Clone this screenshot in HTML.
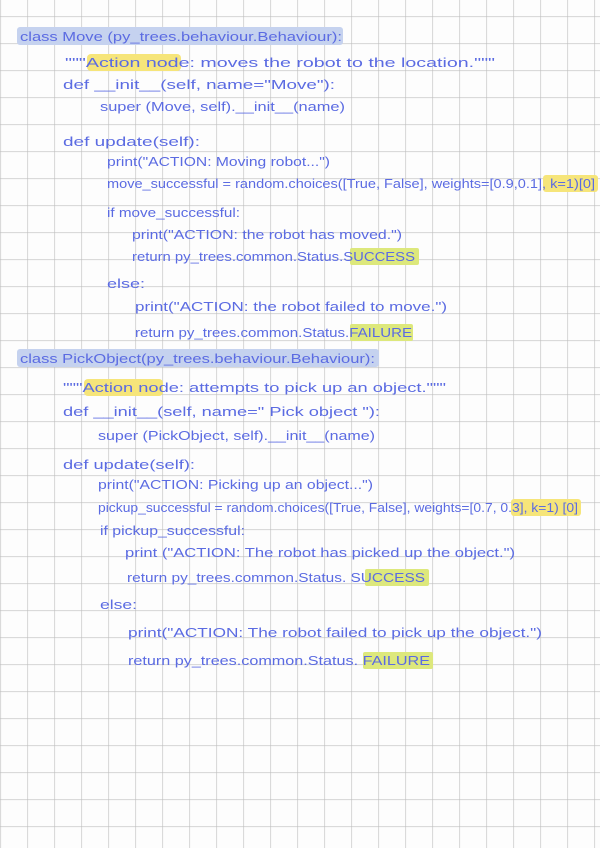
<!DOCTYPE html>
<html><head><meta charset="utf-8"><style>
html,body{margin:0;padding:0;background:#fdfdfd;}
svg{display:block}
text{font-family:"Liberation Sans",sans-serif;font-size:12.5px;fill:#5b6be2;}
</style></head><body>
<svg width="600" height="848" viewBox="0 0 600 848" xmlns="http://www.w3.org/2000/svg">
<defs>
<pattern id="g" x="0.3" y="16.3" width="27" height="27" patternUnits="userSpaceOnUse">
<path d="M0 0H27M0 0V27" stroke="#bdbdbd" stroke-width="1.2" fill="none"/>
</pattern>
</defs>
<rect width="600" height="848" fill="#fdfdfd"/>
<rect width="600" height="848" fill="url(#g)"/>
<!-- highlights -->
<rect x="17" y="27" width="326" height="18" rx="3" fill="#c5d2ef"/>
<rect x="87" y="54" width="94" height="17" rx="4" fill="#f6e57a"/>
<rect x="543" y="175" width="55" height="17" rx="3" fill="#f6e57a"/>
<rect x="350" y="248" width="69" height="17" rx="2" fill="#dde87c"/>
<rect x="350" y="324" width="63" height="17" rx="2" fill="#dde87c"/>
<rect x="17" y="349" width="362" height="18" rx="3" fill="#c5d2ef"/>
<rect x="84" y="379" width="79" height="17" rx="4" fill="#f6e57a"/>
<rect x="511" y="499" width="70" height="17" rx="3" fill="#f6e57a"/>
<rect x="365" y="569" width="64" height="17" rx="2" fill="#dde87c"/>
<rect x="363" y="652" width="70" height="17" rx="2" fill="#dde87c"/>
<!-- text -->
<text x="20" y="41" textLength="322" lengthAdjust="spacingAndGlyphs">class  Move (py_trees.behaviour.Behaviour):</text>
<text x="65" y="67" textLength="430" lengthAdjust="spacingAndGlyphs">"""Action  node: moves the robot to the location."""</text>
<text x="63" y="89" textLength="272" lengthAdjust="spacingAndGlyphs">def __init__(self, name="Move"):</text>
<text x="100" y="111" textLength="245" lengthAdjust="spacingAndGlyphs">super (Move, self).__init__(name)</text>
<text x="63" y="146" textLength="137" lengthAdjust="spacingAndGlyphs">def  update(self):</text>
<text x="107" y="166" textLength="223" lengthAdjust="spacingAndGlyphs">print("ACTION: Moving robot...")</text>
<text x="107" y="188" textLength="488" lengthAdjust="spacingAndGlyphs">move_successful = random.choices([True, False], weights=[0.9,0.1], k=1)[0]</text>
<text x="107" y="217" textLength="133" lengthAdjust="spacingAndGlyphs">if move_successful:</text>
<text x="132" y="239" textLength="270" lengthAdjust="spacingAndGlyphs">print("ACTION: the robot has moved.")</text>
<text x="132" y="261" textLength="283" lengthAdjust="spacingAndGlyphs">return  py_trees.common.Status.SUCCESS</text>
<text x="107" y="288" textLength="38" lengthAdjust="spacingAndGlyphs">else:</text>
<text x="135" y="311" textLength="312" lengthAdjust="spacingAndGlyphs">print("ACTION: the robot failed to move.")</text>
<text x="135" y="337" textLength="277" lengthAdjust="spacingAndGlyphs">return py_trees.common.Status.FAILURE</text>
<text x="20" y="363" textLength="355" lengthAdjust="spacingAndGlyphs">class PickObject(py_trees.behaviour.Behaviour):</text>
<text x="63" y="392" textLength="383" lengthAdjust="spacingAndGlyphs">"""Action node: attempts to pick up an object."""</text>
<text x="63" y="416" textLength="317" lengthAdjust="spacingAndGlyphs">def __init__(self, name=" Pick object "):</text>
<text x="98" y="440" textLength="277" lengthAdjust="spacingAndGlyphs">super (PickObject, self).__init__(name)</text>
<text x="63" y="469" textLength="132" lengthAdjust="spacingAndGlyphs">def  update(self):</text>
<text x="98" y="489" textLength="275" lengthAdjust="spacingAndGlyphs">print("ACTION: Picking up an object...")</text>
<text x="98" y="512" textLength="480" lengthAdjust="spacingAndGlyphs">pickup_successful = random.choices([True, False], weights=[0.7, 0.3], k=1) [0]</text>
<text x="100" y="535" textLength="145" lengthAdjust="spacingAndGlyphs">if pickup_successful:</text>
<text x="125" y="557" textLength="390" lengthAdjust="spacingAndGlyphs">print ("ACTION: The robot  has picked up the object.")</text>
<text x="127" y="582" textLength="298" lengthAdjust="spacingAndGlyphs">return  py_trees.common.Status. SUCCESS</text>
<text x="100" y="609" textLength="37" lengthAdjust="spacingAndGlyphs">else:</text>
<text x="128" y="637" textLength="414" lengthAdjust="spacingAndGlyphs">print("ACTION: The robot  failed to pick up the object.")</text>
<text x="128" y="665" textLength="302" lengthAdjust="spacingAndGlyphs">return   py_trees.common.Status. FAILURE</text>
</svg>
</body></html>
